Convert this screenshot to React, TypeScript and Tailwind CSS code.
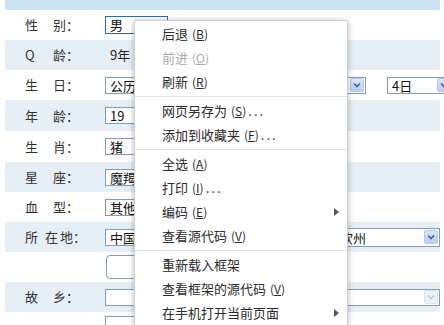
import React from 'react';

const font = "font-['Noto_Sans_CJK_SC','Noto_Sans',sans-serif]";

const Arrow: React.FC<{ disabled?: boolean }> = ({ disabled }) => (
  <span
    className={`flex items-center justify-center w-[14px] h-[14px] rounded-[2px] border ${
      disabled ? 'border-[#dde3ea] bg-[#eef1f4]' : 'border-[#b7c9ee] bg-gradient-to-b from-[#dbe6fb] to-[#b6cbf5]'
    }`}
  >
    <svg width="8" height="6" viewBox="0 0 8 6">
      <path d="M1 1.5 L4 4.5 L7 1.5" fill="none" stroke={disabled ? '#c3cad3' : '#4d6185'} strokeWidth="1.6" />
    </svg>
  </span>
);

const Select: React.FC<{ text?: string; className?: string; disabled?: boolean; arrow?: boolean }> = ({
  text,
  className = '',
  disabled,
  arrow = true,
}) => (
  <div
    className={`flex shrink-0 items-center justify-between h-[17px] border border-[#7f9db9] bg-white pl-[4px] pr-[1px] text-[13px] leading-none text-[#111] ${className}`}
  >
    <span>{text}</span>
    {arrow && <Arrow disabled={disabled} />}
  </div>
);

const Label: React.FC<{ a: string; b: string }> = ({ a, b }) => (
  <div className="flex shrink-0 w-[100px] pl-[20px] text-[13px] text-[#333]">
    <span className="w-[28px]">{a}</span>
    <span>{b}：</span>
  </div>
);

const Row: React.FC<{ blue?: boolean; h?: string; children: React.ReactNode }> = ({ blue, h = 'h-[30px]', children }) => (
  <div className={`flex items-center ${h} ${blue ? 'bg-[#e6eef6]' : 'bg-white'}`}>{children}</div>
);

type Item = { label: string; key?: string; dots?: boolean; disabled?: boolean; sub?: boolean } | 'sep';

const items: Item[] = [
  { label: '后退', key: 'B' },
  { label: '前进', key: 'O', disabled: true },
  { label: '刷新', key: 'R' },
  'sep',
  { label: '网页另存为', key: 'S', dots: true },
  { label: '添加到收藏夹', key: 'F', dots: true },
  'sep',
  { label: '全选', key: 'A' },
  { label: '打印', key: 'I', dots: true },
  { label: '编码', key: 'E', sub: true },
  { label: '查看源代码', key: 'V' },
  'sep',
  { label: '重新载入框架' },
  { label: '查看框架的源代码', key: 'V' },
  { label: '在手机打开当前页面', sub: true },
];

const ContextMenu: React.FC = () => (
  <div className="absolute left-[134px] top-[20px] w-[214px] h-[330px] bg-white border border-[#cfcfcf] rounded-t-[3px] shadow-[0_1px_6px_rgba(0,0,0,0.28)] pt-[1px]">
    {items.map((it, i) =>
      it === 'sep' ? (
        <div key={i} className="h-[5px] flex items-center">
          <div className="w-full h-px bg-[#e3e3e3]" />
        </div>
      ) : (
        <div
          key={i}
          className={`relative flex items-center h-[24px] pl-[27px] text-[13px] ${it.disabled ? 'text-[#a9a9a9]' : 'text-[#2b2b2b]'}`}
        >
          <span>{it.label}</span>
          {it.key && (
            <span className="ml-[4px] text-[12px]">
              (<span className="underline">{it.key}</span>)
            </span>
          )}
          {it.dots && <span className="ml-[2px] tracking-[2px]">...</span>}
          {it.sub && (
            <svg className="absolute right-[8px] top-[8px]" width="5" height="8" viewBox="0 0 5 8">
              <path d="M0 0 L5 4 L0 8 Z" fill="#555" />
            </svg>
          )}
        </div>
      )
    )}
  </div>
);

const App: React.FC = () => {
  return (
    <div className={`relative w-[444px] h-[325px] overflow-hidden bg-white ${font}`}>
      <div className="pl-[5px] pr-[4px]">
        <div className="h-[10px] bg-[#cbe1f5]" />

        <Row>
          <Label a="性" b="别" />
          <div className="flex shrink-0 items-center w-[63px] h-[18px] border border-[#2f6aa0] pl-[4px] text-[13px] text-[#111]">男</div>
        </Row>

        <Row blue>
          <Label a="Q" b="龄" />
          <span className="pl-[5px] text-[13px] text-[#222]">9年</span>
        </Row>

        <Row>
          <Label a="生" b="日" />
          <Select text="公历" className="w-[70px]" arrow={false} />
          <Select className="ml-[6px] w-[185px]" />
          <Select text="4日" className="ml-[21px] w-[66px]" />
        </Row>

        <Row blue h="h-[31px]">
          <Label a="年" b="龄" />
          <Select text="19" className="w-[70px]" arrow={false} />
        </Row>

        <Row h="h-[31px]">
          <Label a="生" b="肖" />
          <Select text="猪" className="w-[70px]" arrow={false} />
        </Row>

        <Row blue>
          <Label a="星" b="座" />
          <Select text="魔羯座" className="w-[120px]" arrow={false} />
        </Row>

        <Row>
          <Label a="血" b="型" />
          <Select text="其他" className="w-[120px]" arrow={false} />
        </Row>

        <Row blue>
          <div className="flex shrink-0 w-[100px] pl-[20px] text-[13px] text-[#333]">
            <span className="w-[20px]">所</span>
            <span className="w-[15px]">在</span>
            <span>地：</span>
          </div>
          <Select text="中国" className="w-[100px]" arrow={false} />
          <Select className="ml-[8px] w-[115px]" arrow={false} />
          <Select text="钦州" className="ml-[7px] w-[105px] h-[19px]" />
        </Row>

        <Row>
          <div className="w-[101px] shrink-0" />
          <div className="w-[160px] h-[24px] shrink-0 rounded-[4px] border border-[#7f9db9] bg-white" />
        </Row>

        <Row blue>
          <Label a="故" b="乡" />
          <Select className="w-[100px]" arrow={false} />
          <Select className="ml-[8px] w-[115px]" arrow={false} />
          <Select className="ml-[7px] w-[105px]" disabled />
        </Row>

        <Row h="h-[13px]">
          <div className="w-[100px] shrink-0" />
          <div className="mt-[12px] w-[160px] h-[17px] shrink-0 border border-[#7f9db9]" />
        </Row>
      </div>

      <ContextMenu />
    </div>
  );
};

export default App;
